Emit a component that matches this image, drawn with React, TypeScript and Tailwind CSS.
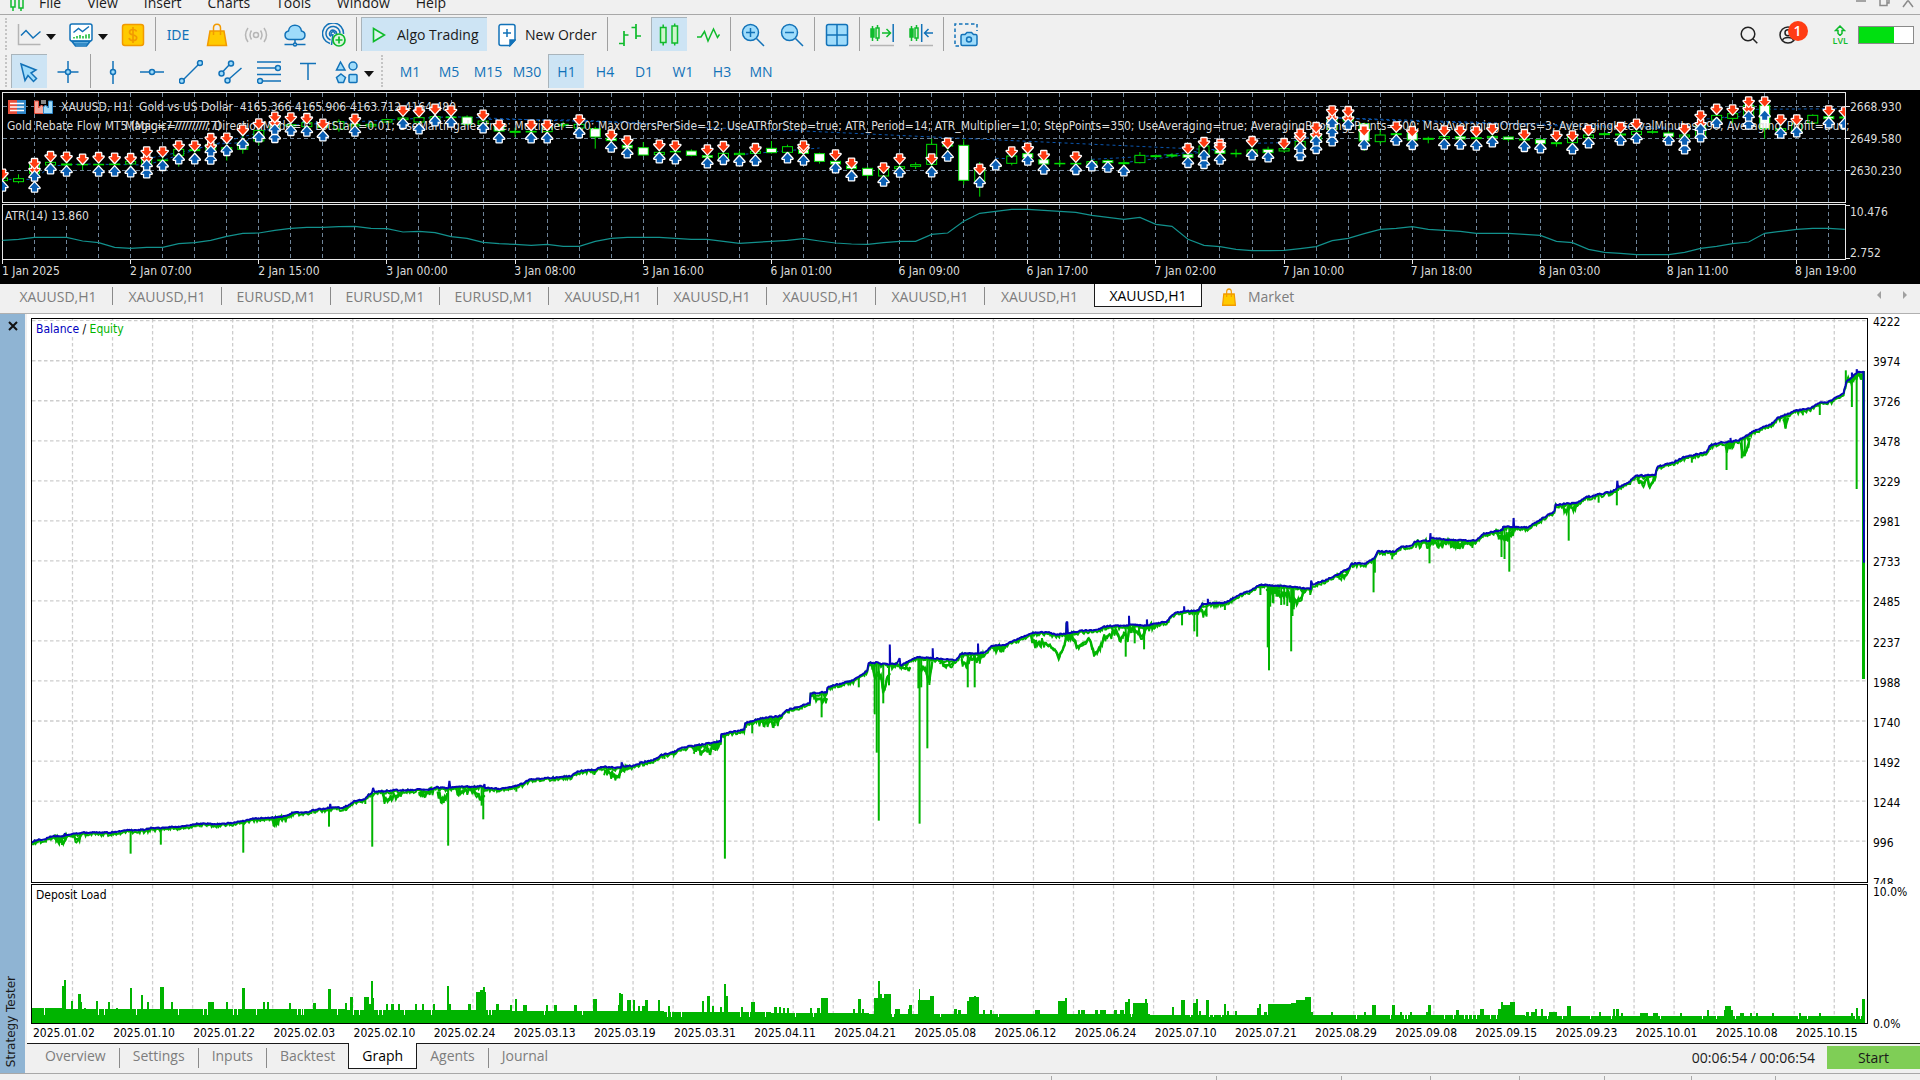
import React from "react";

/* ---------- toolbar icons ---------- */

const B = "#1272b8";
const L = "#9fdcfb";
const G = "#0fbb2c";

type IconProps = { children: React.ReactNode; color?: string };

function Ico({ children, color = B }: IconProps) {
  return (
    <svg width="24" height="24" viewBox="0 0 24 24" fill="none" stroke={color} strokeWidth="1.5" aria-hidden="true">
      {children}
    </svg>
  );
}

const icons = {
  lineChart: (
    <Ico>
      <path d="M1.5 1v20.500h22" stroke="#b4b4b4" />
      <path d="M4 12.500l5-5 7 7.500 7.500-6.500" />
    </Ico>
  ),
  monitor: (
    <Ico>
      <rect x="1" y="1" width="22" height="17" rx="2" fill="#fff" />
      <path d="M4.500 9.500l5-4 4 3 6.500-5" />
      <path d="M5 15.500v-1.500M8 15.500v-2.500M11 15.500v-3.500M14 15.500v-2.500M17 15.500v-4M20 15.500v-4.500" stroke={G} />
      <path d="M3 18.500l3.500 4.500h11l3.500-4.500z" fill={L} />
      <path d="M3 18.500h18M5 21h14" />
    </Ico>
  ),
  dollar: (
    <Ico color="#f29a00">
      <rect x="1.500" y="1.500" width="21" height="21" rx="2.500" fill="#ffca00" />
      <path d="M15.500 8.500c-.5-1.500-1.800-2-3.500-2-2 0-3.500 1-3.500 2.700 0 3.800 7.200 1.800 7.200 5.500 0 1.800-1.700 2.800-3.700 2.800s-3.500-.8-3.900-2.500M12 4v16" strokeWidth="1.700" />
    </Ico>
  ),
  bag: (
    <Ico color="#f29a00">
      <path d="M5 8h14l2.500 14.500h-19z" fill="#ffca00" />
      <path d="M8.500 12V5c0-5 7-5 7 0v7" />
    </Ico>
  ),
  signal: (
    <Ico color="#b6b6b6">
      <circle cx="12" cy="12" r="2.500" />
      <path d="M7.500 7.500q-3 4.500 0 9M16.500 7.500q3 4.500 0 9M4 5q-5 7 0 14M20 5q5 7 0 14" />
    </Ico>
  ),
  cloud: (
    <Ico>
      <path d="M6 16.500a4.300 4.300 0 0 1-.5-8.500c.5-7.500 12-8 13 0a4.300 4.300 0 0 1-.5 8.500z" fill={L} />
      <path d="M12 16.500v4M1.500 21.500h8.500M14 21.500h8.500" />
      <circle cx="12" cy="21.500" r="1.500" />
    </Ico>
  ),
  target: (
    <Ico>
      <path d="M8 20.500A10.500 10.500 0 1 1 21.500 11M8.500 17A7 7 0 1 1 18 10.500M9 13.500a3.500 3.500 0 1 1 5.500-2" />
      <path d="M10 12.500a2 2 0 1 1 3-1.500M11 11l-1.500 11" />
      <circle cx="17" cy="17" r="6" fill="#dff5df" stroke={G} strokeWidth="1.700" />
      <path d="M17 13.500v7M13.500 17h7" stroke={G} strokeWidth="1.700" />
    </Ico>
  ),
  play: (
    <svg width="14" height="16" viewBox="0 0 14 16" fill="#dff5ee" stroke={G} strokeWidth="1.600" aria-hidden="true">
      <path d="M1.500 1.500l11 6.500-11 6.500z" />
    </svg>
  ),
  newOrder: (
    <svg width="18" height="24" viewBox="0 0 18 24" fill="#fff" stroke={B} strokeWidth="1.500" aria-hidden="true">
      <path d="M3 1.500h12a2 2 0 0 1 2 2V17l-5 5.500H3a2 2 0 0 1-2-2v-17a2 2 0 0 1 2-2z" />
      <path d="M17 17l-5 5.500V17z" fill={B} />
      <path d="M9 6v8M5 10h8" />
    </svg>
  ),
  bars: (
    <Ico color={G}>
      <path d="M6 8v15M1 20.500h5M6 12h4.500M18 1v15M13.500 4.500H18M18 13h5" strokeWidth="1.700" />
    </Ico>
  ),
  candles: (
    <Ico color={G}>
      <rect x="3.500" y="4.500" width="5.500" height="15" fill="#cdf5cd" />
      <rect x="15" y="3" width="5.500" height="17" fill="#cdf5cd" />
      <path d="M6.200 1.500v3M6.200 19.500v3M17.700.5V3M17.700 20v2.500" />
    </Ico>
  ),
  wave: (
    <Ico color={G}>
      <path d="M1 14h4l3.500-5.500 3.500 9.500 5.500-12 4 8.500 2-3" />
    </Ico>
  ),
  zoomIn: (
    <Ico>
      <circle cx="9.500" cy="9.500" r="8" fill={L} />
      <path d="M15.500 15.500l7.500 7.500M9.500 5v9M5 9.500h9" />
    </Ico>
  ),
  zoomOut: (
    <Ico>
      <circle cx="9.500" cy="9.500" r="8" fill={L} />
      <path d="M15.500 15.500l7.500 7.500M5 9.500h9" />
    </Ico>
  ),
  tile: (
    <Ico>
      <rect x="1.500" y="1.500" width="21" height="21" rx="2" fill={L} />
      <path d="M12 1.500v21M1.500 12h21" />
    </Ico>
  ),
  scrollEnd: (
    <Ico color={G}>
      <path d="M2.500 3v15M7.500 2v16" />
      <rect x="1" y="6" width="3" height="8" fill={G} />
      <rect x="6" y="5" width="3" height="10" fill="#cdf5cd" />
      <path d="M12 10h8M16.500 6l4 4-4 4" />
      <path d="M23.200 1v18" stroke={B} />
      <path d="M0 22.500h24" stroke="#b4b4b4" />
    </Ico>
  ),
  shift: (
    <Ico color={G}>
      <path d="M2.500 3v15M7.500 2v16" />
      <rect x="1" y="6" width="3" height="8" fill={G} />
      <rect x="6" y="5" width="3" height="10" fill="#cdf5cd" />
      <path d="M12.700 1v18M24 10h-8M19.500 6l-4 4 4 4" stroke={B} />
      <path d="M0 22.500h24" stroke="#b4b4b4" />
    </Ico>
  ),
  camera: (
    <Ico>
      <path d="M5 23H1V1h22v7" strokeDasharray="3.500 2.500" />
      <path d="M7 13q0-1.500 1.500-1.500h2.500l2-2h4.500l2 2h2q1.500 0 1.500 1.500v8q0 1.500-1.500 1.500h-13Q7 22.500 7 21z" fill={L} />
      <circle cx="15" cy="16.500" r="2.500" />
    </Ico>
  ),
  cursor: (
    <Ico>
      <path d="M4 4l15 6-5 3 5.500 5.500-3 3-5.500-6-3 5z" fill={L} />
    </Ico>
  ),
  crosshair: (
    <Ico>
      <path d="M12 1v22M1.500 12h21" />
      <circle cx="12" cy="12" r="2.500" fill={L} />
    </Ico>
  ),
  vline: (
    <Ico>
      <path d="M12 1v23" />
      <circle cx="12" cy="12" r="2.500" fill={L} />
    </Ico>
  ),
  hline: (
    <Ico>
      <path d="M0 12h24" />
      <circle cx="12" cy="12" r="2.500" fill={L} />
    </Ico>
  ),
  trend: (
    <Ico>
      <path d="M4 20L20 4" />
      <circle cx="2.800" cy="21" r="2.500" fill={L} />
      <circle cx="21" cy="3" r="2.500" fill={L} />
    </Ico>
  ),
  channel: (
    <Ico>
      <path d="M4.500 12L12 4M11 19L23.500 8" />
      <circle cx="3.500" cy="13.500" r="2.500" fill={L} />
      <circle cx="13" cy="3.500" r="2.500" fill={L} />
      <circle cx="9.500" cy="20.500" r="2.500" fill={L} />
    </Ico>
  ),
  fibo: (
    <Ico>
      <path d="M0 2h24M0 8h19M0 14.500h24M5 21h19" />
      <circle cx="21" cy="8" r="2.500" fill={L} />
      <circle cx="3" cy="21" r="2.500" fill={L} />
    </Ico>
  ),
  text: (
    <Ico>
      <path d="M4 3.500h16M12 3.500V20" />
    </Ico>
  ),
  shapes: (
    <Ico>
      <path d="M5.500 2L10 10H1.500z" fill={L} />
      <circle cx="18" cy="6" r="4" fill={L} />
      <path d="M6 14l4.500 3.500-2 5h-5l-2-5z" fill={L} />
      <rect x="14" y="14.500" width="8" height="8" rx="1" fill={L} />
    </Ico>
  ),
};

function Sep() {
  return (
    <div className="flex h-[34px] w-[3px] justify-center">
      <div className="w-px bg-[#a0a0a0]" />
    </div>
  );
}

function Grip() {
  return <div className="h-8 w-[3px] border-l-2 border-dotted border-[#c4c4c4]" />;
}

function ToolButton({ icon, label, active }: { icon: React.ReactNode; label: string; active?: boolean }) {
  return (
    <button
      aria-label={label}
      className={
        active
          ? "flex h-[34px] w-9 items-center justify-center border-t border-l border-[#a9b4bb] bg-[#cde4f4] pr-px"
          : "flex h-[34px] w-9 items-center justify-center pt-px"
      }
    >
      {icon}
    </button>
  );
}

function DropButton({ icon, label }: { icon: React.ReactNode; label: string }) {
  return (
    <button aria-label={label} className="flex h-[34px] w-[49px] items-center justify-between pt-px pr-1 pl-[6px]">
      {icon}
      <svg className="mt-1" width="10" height="6" viewBox="0 0 10 6" aria-hidden="true">
        <path d="M0 0h10L5 6z" fill="#111" />
      </svg>
    </button>
  );
}

/* ---------- price chart ---------- */

const slotX = (i: number) => 2.5 + 16.02 * i;
const rowY = (v: number) => 86 + v / 3;

const sells: [number, ...number[]][] = [
  [0, 265], [2, 252, 233], [3, 212], [4, 214], [5, 220], [6, 215], [7, 217], [8, 218], [9, 219, 198], [10, 198], [11, 180],
  [12, 180], [13, 182, 158], [14, 157], [15, 133], [16, 114], [17, 112, 94], [18, 96], [19, 98], [20, 115], [22, 100],
  [25, 75], [26, 77], [27, 70], [28, 75], [30, 88], [31, 118], [33, 118], [34, 118], [36, 102], [38, 148], [39, 165],
  [41, 178], [42, 180], [44, 192], [45, 182], [47, 188], [50, 188, 180], [52, 207], [53, 232], [55, 246], [56, 219],
  [58, 219], [59, 172], [61, 250], [63, 198], [64, 187], [65, 209], [67, 213], [74, 188], [75, 170], [76, 175, 184],
  [78, 167], [80, 173], [81, 155, 145], [82, 148, 125], [83, 98, 75], [84, 98, 77], [85, 135], [87, 123], [88, 137],
  [90, 135], [91, 135], [92, 137], [93, 130], [95, 146], [97, 150], [98, 150], [99, 133], [101, 125], [102, 115],
  [105, 130], [106, 115, 90], [107, 70], [108, 72], [109, 70, 48], [110, 48], [111, 102], [112, 102], [114, 75], [115, 78],
];

const buys: [number, ...number[]][] = [
  [0, 300], [2, 303, 270], [3, 248], [4, 255], [6, 255], [7, 255], [8, 257], [9, 260, 237], [10, 238], [11, 218],
  [12, 218], [13, 219, 195], [14, 193], [15, 173], [16, 152], [17, 154, 130], [18, 133], [19, 135], [20, 149], [22, 135],
  [25, 112], [26, 128], [27, 104], [28, 108], [30, 125], [31, 155], [33, 155], [34, 155], [36, 140], [38, 183],
  [39, 200], [41, 215], [42, 218], [44, 230], [45, 220], [46, 224], [47, 223], [49, 215], [50, 222], [52, 245],
  [53, 269], [55, 285], [56, 258], [58, 257], [59, 210], [61, 288], [62, 236], [64, 222], [65, 249], [67, 250],
  [68, 239], [69, 243], [70, 254], [74, 229], [75, 232, 208], [76, 219], [78, 206], [79, 212], [81, 208, 185],
  [82, 187, 164], [83, 164, 138, 110], [84, 115], [85, 175], [87, 162], [88, 175], [90, 174], [91, 174], [92, 177],
  [93, 167], [95, 181], [96, 185], [98, 188], [99, 170], [101, 162], [102, 156], [104, 162], [105, 188, 163],
  [106, 152, 128], [107, 110], [109, 114, 90], [110, 88], [111, 141], [112, 137], [114, 110], [115, 112],
];

/* slot, high, body top, body bottom, low, falling */
const candles: [number, number, number, number, number, 0 | 1][] = [
  [0, 265, 276, 284, 295, 0], [1, 265, 278, 287, 292, 0], [2, 225, 235, 262, 290, 0], [3, 215, 229, 237, 245, 0],
  [4, 220, 234, 237, 250, 0], [5, 225, 235, 236, 252, 0], [6, 225, 235, 236, 250, 0], [7, 225, 234, 236, 245, 0],
  [8, 220, 226, 234, 245, 0], [9, 210, 218, 234, 245, 0], [10, 210, 222, 224, 240, 0], [11, 180, 190, 208, 242, 0],
  [12, 180, 191, 194, 215, 0], [13, 165, 175, 192, 210, 0], [14, 160, 185, 190, 224, 0], [15, 140, 170, 190, 203, 0],
  [16, 125, 133, 165, 178, 0], [17, 110, 120, 133, 150, 0], [18, 100, 116, 120, 135, 0], [19, 100, 110, 122, 138, 0],
  [20, 110, 118, 124, 140, 1], [21, 100, 107, 129, 137, 0], [22, 104, 115, 120, 130, 0], [23, 108, 115, 120, 125, 0],
  [24, 98, 101, 108, 112, 0], [25, 84, 96, 101, 110, 0], [26, 88, 95, 108, 118, 0], [27, 84, 92, 100, 110, 0],
  [28, 80, 93, 95, 108, 0], [29, 88, 93, 115, 119, 1], [30, 95, 105, 114, 125, 0], [31, 110, 121, 135, 147, 1],
  [32, 125, 136, 139, 153, 0], [33, 125, 136, 138, 150, 0], [34, 118, 125, 137, 148, 0], [35, 107, 115, 119, 125, 0],
  [36, 108, 115, 126, 135, 0], [37, 122, 128, 153, 188, 1], [38, 148, 157, 164, 175, 1], [39, 168, 178, 186, 194, 1],
  [40, 168, 185, 207, 210, 1], [41, 185, 199, 206, 212, 0], [42, 185, 196, 197, 208, 0], [43, 190, 195, 208, 211, 1],
  [44, 200, 209, 214, 221, 1], [45, 195, 202, 216, 220, 0], [46, 195, 202, 206, 215, 0], [47, 190, 196, 202, 210, 0],
  [48, 165, 187, 200, 203, 1], [49, 176, 182, 199, 205, 0], [50, 185, 193, 202, 210, 1], [51, 200, 203, 226, 233, 1],
  [52, 215, 226, 234, 240, 1], [53, 236, 240, 248, 255, 1], [54, 242, 247, 268, 278, 1], [55, 245, 250, 270, 277, 0],
  [56, 232, 242, 248, 253, 0], [57, 229, 236, 241, 249, 0], [58, 158, 175, 235, 250, 0], [59, 165, 178, 180, 195, 0],
  [60, 160, 178, 283, 296, 1], [61, 228, 250, 285, 332, 0], [62, 225, 238, 242, 248, 0], [63, 185, 210, 232, 238, 0],
  [64, 190, 203, 215, 222, 1], [65, 208, 221, 234, 240, 1], [66, 222, 232, 233, 242, 0], [67, 222, 232, 234, 245, 0],
  [68, 220, 227, 235, 240, 0], [69, 220, 224, 230, 236, 1], [70, 222, 230, 233, 240, 0], [71, 198, 208, 230, 232, 0],
  [72, 205, 209, 212, 215, 0], [73, 202, 207, 210, 215, 0], [74, 198, 206, 214, 222, 1], [75, 175, 180, 206, 220, 0],
  [76, 185, 193, 202, 212, 1], [77, 190, 202, 203, 214, 0], [78, 182, 192, 204, 212, 0], [79, 182, 190, 200, 206, 1],
  [80, 175, 188, 195, 200, 0], [81, 158, 166, 190, 200, 0], [82, 140, 150, 168, 178, 0], [83, 85, 95, 130, 150, 0],
  [84, 85, 92, 105, 118, 0], [85, 110, 113, 165, 195, 1], [86, 130, 147, 167, 175, 0], [87, 135, 143, 146, 152, 0],
  [88, 132, 142, 162, 168, 1], [89, 152, 157, 160, 172, 0], [90, 145, 152, 158, 165, 0], [91, 146, 152, 159, 166, 1],
  [92, 146, 155, 158, 166, 0], [93, 142, 151, 155, 163, 0], [94, 150, 153, 160, 167, 1], [95, 150, 159, 162, 170, 0],
  [96, 155, 161, 173, 178, 1], [97, 162, 170, 173, 182, 0], [98, 150, 154, 170, 178, 0], [99, 140, 147, 155, 163, 0],
  [100, 138, 143, 146, 148, 0], [101, 134, 144, 147, 155, 0], [102, 130, 136, 146, 152, 0], [103, 132, 137, 139, 143, 0],
  [104, 135, 141, 151, 158, 1], [105, 138, 147, 153, 162, 0], [106, 110, 120, 150, 155, 0], [107, 80, 88, 102, 112, 0],
  [108, 80, 83, 97, 112, 0], [109, 52, 58, 90, 98, 0], [110, 40, 58, 128, 158, 1], [111, 112, 128, 134, 142, 0],
  [112, 108, 113, 135, 142, 0], [113, 85, 88, 111, 114, 0], [114, 82, 92, 98, 104, 1], [115, 84, 93, 96, 104, 0],
];

const atr = [
  463, 460, 454, 454, 454, 465, 470, 484, 487, 484, 484, 473, 470, 463, 451, 442, 441, 433, 427, 424, 424, 422, 421, 427,
  428, 438, 436, 440, 452, 457, 469, 473, 475, 478, 475, 481, 481, 466, 457, 454, 454, 454, 457, 460, 460, 466, 472, 469,
  466, 463, 458, 465, 471, 474, 475, 470, 466, 466, 445, 441, 406, 382, 376, 370, 370, 373, 376, 379, 388, 394, 400, 394,
  415, 421, 460, 478, 482, 490, 494, 494, 493, 488, 482, 464, 457, 443, 430, 427, 422, 430, 433, 436, 442, 442, 442, 445,
  448, 466, 470, 490, 499, 502, 506, 506, 506, 499, 487, 481, 473, 468, 442, 436, 430, 427, 427, 430,
];

const dealLinks: [number, number][][] = [
  [[0, 280], [2, 280], [3, 240], [5, 234], [9, 237], [11, 208], [13, 175], [15, 170], [17, 120], [28, 92], [34, 103], [40, 110]],
  [[9, 218], [12, 190], [16, 140], [17, 120]],
  [[30, 100], [36, 102], [44, 125], [50, 135], [59, 155], [75, 190]],
  [[46, 206], [50, 190], [51, 186]],
  [[62, 217], [63, 218]],
  [[68, 220], [70, 215], [73, 205], [76, 188]],
  [[70, 230], [73, 212], [76, 190]],
  [[78, 172], [80, 170], [82, 150], [83, 95], [87, 104], [96, 118], [105, 130], [109, 70], [115, 68]],
  [[83, 95], [94, 112], [104, 124]],
  [[106, 100], [109, 90]],
];

const DOWN = "M-2.500-4.500h5V-1H5L0 4.500-5-1h2.500z";
const UP = "M-2.500 4.500h5V1H5L0-4.500-5 1h2.500z";

const chartTimes = [
  "1 Jan 2025", "2 Jan 07:00", "2 Jan 15:00", "3 Jan 00:00", "3 Jan 08:00", "3 Jan 16:00", "6 Jan 01:00", "6 Jan 09:00",
  "6 Jan 17:00", "7 Jan 02:00", "7 Jan 10:00", "7 Jan 18:00", "8 Jan 03:00", "8 Jan 11:00", "8 Jan 19:00",
];

function PriceChart() {
  const gridX = Array.from({ length: 57 }, (_, k) => Math.floor(34.5 + 32.04 * k) + 0.5);
  return (
    <section
      aria-label="XAUUSD, H1"
      className="overflow-hidden bg-black font-['DejaVu_Sans_Condensed','DejaVu_Sans',sans-serif] text-xs text-[#dcdcdc]"
    >
      <div className="flex">
        <div className="relative min-w-0 flex-1 overflow-hidden">
          <svg className="block h-[174px] w-full" viewBox="0 90 1850 174" preserveAspectRatio="none" aria-hidden="true">
            <clipPath id="pane">
              <rect x="2" y="92" width="1843" height="112" />
            </clipPath>
            <g stroke="#6f8498" strokeDasharray="4 3" shapeRendering="crispEdges">
              {gridX.map((x) => (
                <path key={x} d={`M${x} 93V202M${x} 205V259`} />
              ))}
              {[106.5, 138.5, 170.5].map((y) => (
                <path key={y} d={`M3 ${y}H1845`} />
              ))}
            </g>
            <g clipPath="url(#pane)">
              <g fill="none" stroke="#0b57b0" strokeDasharray="3 3">
                {dealLinks.map((pts, n) => (
                  <polyline key={n} points={pts.map(([i, v]) => `${slotX(i)},${rowY(v)}`).join(" ")} />
                ))}
              </g>
              <g stroke="#00e000">
                {candles.map(([i, hi, top, bot, lo, falling]) => (
                  <g key={i}>
                    <path d={`M${slotX(i)} ${rowY(hi)}V${rowY(lo)}`} />
                    <rect
                      x={slotX(i) - 5}
                      y={rowY(top)}
                      width="10"
                      height={Math.max(0.5, (bot - top) / 3)}
                      fill={falling ? "#fff" : "#000"}
                    />
                  </g>
                ))}
              </g>
            </g>
            <g fill="none" stroke="#e8e8e8" shapeRendering="crispEdges">
              <rect x="2.500" y="92.500" width="1843" height="110" />
              <rect x="2.500" y="204.500" width="1843" height="55" />
              <path d="M1845 106.500h5M1845 138.500h5M1845 170.500h5M1845 205.500h5M1845 258.500h5" />
              {Array.from({ length: 15 }, (_, k) => (
                <path key={k} d={`M${2.5 + 128.15 * k} 260v4`} />
              ))}
            </g>
            <polyline fill="none" stroke="#12918d" strokeWidth="1.200" points={atr.map((v, i) => `${slotX(i)},${rowY(v)}`).join(" ")} />
          </svg>
          <div className="absolute top-[9px] left-2 flex items-center gap-[8px] whitespace-pre">
            <svg width="18" height="14" viewBox="0 0 18 14" aria-hidden="true">
              <rect width="9" height="14" fill="#e8503c" />
              <rect x="9" width="9" height="14" fill="#2f86c8" />
              <path d="M2 3.500h14M2 7h14M2 10.500h14" stroke="#fff" strokeWidth="1.500" />
            </svg>
            <svg width="19" height="14" viewBox="0 0 19 14" aria-hidden="true">
              <path d="M.5 1h4v7l3-3 2 2v6.500h-9z" fill="#f7a89c" stroke="#e8503c" />
              <path d="M18.500 1h-4v7l-3-3-2 2v6.500h9z" fill="#9fdcfb" stroke="#2f86c8" />
              <path d="M7 0h5v4H7z" fill="#888" />
            </svg>
            <span>XAUUSD, H1:  Gold vs US Dollar  4165.366 4165.906 4163.712 4164.480</span>
          </div>
          <p className="absolute top-7 left-[7px] whitespace-nowrap">Gold Rebate Flow MT5 (Magic=777777)</p>
          <p className="absolute top-7 left-[125px] whitespace-nowrap">
            Magic=777777; DirectionMode=1; LotStart=0.01; UseMartingale=true; Multiplier=1.0; MaxOrdersPerSide=12;
            UseATRforStep=true; ATR_Period=14; ATR_Multiplier=1.0; StepPoints=350; UseAveraging=true;
            AveragingBooking_Points=600; MaxAveragingOrders=3; AveragingIntervalMinutes=90; Averaging_Profit=true;
          </p>
          <p className="absolute top-[118px] left-[5px] bg-black">ATR(14) 13.860</p>
          <svg className="absolute inset-0 h-[174px] w-full" viewBox="0 90 1850 174" preserveAspectRatio="none" aria-hidden="true">
            <g clipPath="url(#pane)" stroke="#fff" strokeWidth="2.600" strokeLinejoin="round" paintOrder="stroke">
              {sells.flatMap(([i, ...ys]) =>
                ys.map((v) => <path key={`${i}-${v}`} d={DOWN} fill="#ff3b12" transform={`translate(${slotX(i)} ${rowY(v)})`} />),
              )}
              {buys.flatMap(([i, ...ys]) =>
                ys.map((v) => <path key={`${i}-${v}`} d={UP} fill="#0a5fb4" transform={`translate(${slotX(i)} ${rowY(v)})`} />),
              )}
            </g>
          </svg>
        </div>
        <div className="w-[70px] pt-px leading-4">
          {["2668.930", "2649.580", "2630.230"].map((t) => (
            <p key={t} className="flex h-8 items-center">{t}</p>
          ))}
          <p className="pt-[17px]">10.476</p>
          <p className="pt-[25px]">2.752</p>
        </div>
      </div>
      <div className="-mr-[3px] grid h-5 grid-cols-[repeat(15,minmax(0,1fr))] pl-[2px] leading-[15px]">
        {chartTimes.map((t) => (
          <span key={t} className="whitespace-nowrap">{t}</span>
        ))}
      </div>
    </section>
  );
}

/* ---------- tester graph ---------- */

/* Each segment holds samples in its own grid: origin, units per pixel across, then the points. */
type Pt = [number, number];
type Segment = { x0: number; y0: number; k: number; balance: Pt[]; spikes: Pt[]; dips: Pt[][] };

const segments: Segment[] = [
  {
    x0: 0, y0: 640, k: 2.45,
    balance: [
      [77, 607], [85, 600], [110, 597], [125, 588], [158, 587], [159, 577], [161, 587], [175, 582], [205, 577], [270, 577],
      [300, 571], [355, 568], [372, 563], [400, 563], [440, 559], [480, 551], [550, 551], [570, 547], [600, 541], [620, 535],
      [660, 533], [700, 528], [718, 516], [750, 517], [770, 509], [808, 503], [809, 492], [811, 502], [840, 502], [860, 490],
      [868, 483], [895, 477], [903, 463], [912, 458], [914, 443], [918, 455], [960, 450], [1060, 447], [1070, 441],
      [1099, 444], [1101, 422], [1103, 441], [1185, 438], [1187, 432], [1188, 442], [1225, 446], [1260, 438], [1285, 428],
      [1295, 418], [1350, 413], [1400, 407], [1415, 393], [1460, 388], [1475, 379], [1522, 383], [1523, 364], [1526, 378],
      [1550, 377], [1567, 370],
    ],
    spikes: [
      [152, 615], [320, 641], [394, 614], [596, 638], [675, 555], [806, 560], [848, 513], [895, 492], [912, 620], [1098, 617],
      [1180, 497], [1184, 538], [1265, 455], [1456, 405],
    ],
    dips: [
      [[135, 592], [145, 602], [155, 608], [165, 590]],
      [[175, 588], [192, 594], [200, 585]],
      [[665, 538], [675, 548], [682, 536], [705, 532]],
      [[938, 462], [942, 483], [952, 474], [975, 462], [985, 453]],
      [[1025, 452], [1035, 464], [1050, 457], [1062, 450]],
      [[1072, 452], [1080, 470], [1092, 478], [1096, 460]],
      [[1118, 445], [1130, 456], [1150, 448], [1168, 455], [1178, 478], [1187, 466]],
      [[1480, 388], [1500, 401], [1515, 408], [1522, 388], [1545, 385]],
    ],
  },
  {
    x0: 640, y0: 560, k: 2.45,
    balance: [
      [0, 608], [40, 596], [50, 585], [85, 575], [100, 562], [150, 553], [198, 543], [199, 522], [255, 507], [258, 488],
      [300, 473], [345, 467], [360, 450], [416, 428], [418, 399], [458, 395], [459, 382], [480, 373], [520, 361],
      [545, 343], [557, 330], [560, 307], [585, 307], [588, 311], [612, 312], [612, 254], [613, 312], [630, 310],
      [636, 293], [638, 316], [680, 290], [717, 294], [717, 263], [718, 294], [775, 298], [787, 280], [828, 280],
      [828, 250], [829, 279], [845, 275], [862, 257], [895, 254], [935, 230], [965, 217], [1000, 216], [1020, 223],
      [1044, 220], [1045, 187], [1047, 187], [1048, 219], [1085, 210], [1115, 210], [1140, 198], [1198, 195], [1198, 167],
      [1199, 194], [1242, 195], [1242, 176], [1243, 195], [1290, 183], [1310, 158], [1333, 153], [1333, 140], [1334, 153],
      [1368, 151], [1378, 130], [1391, 130], [1391, 115], [1392, 130], [1435, 127], [1465, 105], [1500, 88], [1520, 73],
      [1568, 77],
    ],
    spikes: [
      [60, 597], [165, 578], [208, 896], [275, 520], [330, 498], [445, 472], [536, 382], [575, 463], [580, 578], [585, 782],
      [596, 430], [610, 376], [682, 385], [685, 791], [689, 382], [704, 565], [709, 375], [803, 382], [820, 382],
      [1190, 290], [1212, 250], [1235, 268], [1328, 196], [1358, 214], [1365, 230], [1388, 170], [1433, 150], [1520, 105],
      [1538, 262], [1541, 331], [1544, 140], [1550, 128],
    ],
    dips: [
      [[130, 563], [155, 572], [168, 575], [180, 556], [195, 552]],
      [[290, 483], [325, 487], [345, 476]],
      [[422, 405], [436, 415], [458, 415]],
      [[568, 315], [578, 350], [590, 345], [597, 395], [605, 355], [612, 340]],
      [[615, 315], [640, 318], [650, 325], [662, 322]],
      [[682, 330], [700, 328], [709, 360], [716, 305]],
      [[735, 305], [755, 315], [770, 302]],
      [[788, 300], [800, 315], [810, 295], [825, 300], [845, 285]],
      [[865, 260], [885, 268], [895, 258]],
      [
        [958, 225], [968, 248], [985, 245], [1000, 255], [1012, 262], [1028, 285], [1038, 262], [1045, 225], [1060, 228],
        [1070, 262], [1085, 245], [1102, 238], [1115, 282], [1140, 228], [1165, 215], [1175, 236], [1183, 224], [1195, 230],
        [1200, 200], [1215, 210], [1230, 225], [1240, 205], [1265, 193],
      ],
      [[1370, 140], [1380, 155], [1388, 165]],
      [[1535, 85], [1550, 100], [1568, 92]],
    ],
  },
  {
    x0: 1240, y0: 316, k: 2.306,
    balance: [
      [93, 808], [120, 812], [163, 818], [164, 793], [167, 804], [210, 785], [250, 757], [258, 742], [290, 741],
      [310, 725], [318, 705], [355, 706], [370, 693], [395, 687], [405, 675], [438, 673], [439, 650], [440, 664], [480, 671],
      [545, 673], [560, 653], [605, 641], [607, 630], [630, 632], [631, 604], [632, 632], [663, 633], [690, 612],
      [725, 585], [728, 565], [775, 560], [800, 542], [860, 525], [869, 515], [870, 494], [872, 513], [895, 500],
      [912, 478], [958, 476], [962, 452], [1000, 438], [1020, 424], [1075, 407], [1083, 388], [1110, 378], [1131, 376],
      [1131, 365], [1132, 376], [1150, 372], [1170, 357], [1185, 344], [1225, 323], [1240, 305], [1280, 284], [1318, 275],
      [1335, 260], [1355, 259], [1392, 230], [1398, 197], [1411, 183], [1411, 168], [1412, 182], [1422, 170], [1422, 158],
      [1423, 166], [1438, 166], [1439, 740],
    ],
    spikes: [
      [77, 862], [84, 842], [95, 867], [102, 866], [109, 870], [118, 1006], [121, 900], [124, 880], [162, 837], [308, 829],
      [311, 770], [351, 730], [437, 742], [458, 698], [502, 694], [603, 723], [610, 729], [621, 767], [758, 674],
      [827, 560], [869, 568], [1042, 440], [1122, 462], [1130, 400], [1157, 427], [1164, 416], [1298, 298], [1337, 297],
      [1258, 338], [1411, 273], [1422, 519], [1397, 163],
    ],
    dips: [
      [[66, 812], [75, 826], [85, 818], [95, 838], [110, 828], [120, 858], [135, 848], [145, 835], [152, 822]],
      [[222, 777], [245, 775], [250, 765]],
      [[405, 680], [438, 680], [448, 672], [460, 690], [475, 676], [500, 682], [545, 678]],
      [[590, 645], [603, 665], [615, 658], [625, 662], [632, 636]],
      [[745, 572], [753, 585], [762, 575], [780, 566]],
      [[915, 485], [928, 497], [940, 488], [945, 510], [952, 500], [958, 480]],
      [[1120, 395], [1130, 390], [1140, 378]],
      [[1155, 380], [1160, 408], [1166, 410], [1175, 365]],
      [[1253, 305], [1258, 330], [1264, 305]],
      [[1400, 185], [1410, 195], [1422, 180], [1438, 172]],
    ],
  },
];

const noise = (n: number) => {
  const s = Math.sin(n * 127.1) * 43758.5453;
  return s - Math.floor(s);
};

/* Resamples a polyline every pixel and adds a small ripple around it. */
function ripple(pts: Pt[], base: number, amp: number): Pt[] {
  const out: Pt[] = [];
  for (let j = 0; j < pts.length - 1; j++) {
    const [ax, ay] = pts[j];
    const [bx, by] = pts[j + 1];
    const steps = Math.max(1, Math.round(bx - ax));
    for (let s = 0; s < steps; s++) {
      const t = s / steps;
      const x = ax + (bx - ax) * t;
      out.push([x, ay + (by - ay) * t + base + (noise(x) - 0.3) * amp]);
    }
  }
  out.push(pts[pts.length - 1]);
  return out;
}

const toPage = (s: Segment, pts: Pt[]): Pt[] => pts.map(([x, y]) => [s.x0 + x / s.k, s.y0 + y / 3]);
const toPath = (pts: Pt[]) => pts.map(([x, y]) => `${x.toFixed(1)},${y.toFixed(1)}`).join(" ");
const balancePts: Pt[] = segments.flatMap((s) => toPage(s, s.balance));

/* The equity trace follows the balance without its momentary upward peaks. */
const equityBase = balancePts.slice(0, -1).filter((p, i, a) => {
  if (i === 0 || i >= a.length - 1) return true;
  const after = a[i + 1][0] - p[0] < 2.2 ? a[i + 1][1] - p[1] : 0;
  return after < 2.5;
});

function balanceAt(x: number) {
  for (let j = 0; j < balancePts.length - 1; j++) {
    const [ax, ay] = balancePts[j];
    const [bx, by] = balancePts[j + 1];
    if (x >= ax && x <= bx && bx > ax) return ay + ((by - ay) * (x - ax)) / (bx - ax);
  }
  return balancePts[0][1];
}

const balanceLevels = [4222, 3974, 3726, 3478, 3229, 2981, 2733, 2485, 2237, 1988, 1740, 1492, 1244, 996, 748];

const testerDates = [
  "2025.01.02", "2025.01.10", "2025.01.22", "2025.02.03", "2025.02.10", "2025.02.24", "2025.03.13", "2025.03.19",
  "2025.03.31", "2025.04.11", "2025.04.21", "2025.05.08", "2025.06.12", "2025.06.24", "2025.07.10", "2025.07.21",
  "2025.08.29", "2025.09.08", "2025.09.15", "2025.09.23", "2025.10.01", "2025.10.08", "2025.10.15",
];

const gridColumns = Array.from({ length: 45 }, (_, k) => 72.5 + 40.04 * k);

/* centre, width, top */
type Bar = [number, number, number];
const loadParts: { x0: number; bars: Bar[]; base: [number, number, number][]; gaps: number[] }[] = [
  {
    x0: 0,
    base: [[77, 155, 444], [155, 845, 447], [845, 1255, 450], [1255, 1568, 453]],
    gaps: [108, 205, 241, 256, 333, 437, 498, 508, 570, 580, 628, 728, 738, 742, 825, 865, 880, 927, 935, 990, 1055, 1195, 1202, 1332, 1425],
    bars: [
      [155, 5, 378], [159, 4, 360], [177, 4, 423], [195, 7, 402], [199, 4, 427], [208, 4, 443], [237, 4, 423], [267, 4, 427],
      [286, 4, 443], [320, 5, 384], [347, 5, 405], [362, 4, 427], [397, 10, 381], [421, 5, 427], [517, 13, 426],
      [556, 5, 426], [597, 7, 384], [647, 5, 426], [656, 5, 426], [711, 5, 429], [771, 7, 429], [808, 8, 387], [848, 5, 429],
      [861, 6, 411], [898, 11, 411], [907, 5, 432], [912, 5, 363], [915, 4, 415], [949, 5, 432], [962, 8, 432],
      [978, 5, 432], [1020, 5, 432], [1037, 5, 432], [1064, 5, 432], [1098, 5, 378], [1102, 4, 432], [1150, 9, 432],
      [1179, 24, 396], [1183, 12, 390], [1185, 5, 381], [1219, 6, 432], [1253, 5, 435], [1265, 5, 417], [1286, 8, 435],
      [1341, 5, 435], [1361, 5, 435], [1410, 5, 435], [1458, 8, 417], [1515, 4, 435], [1519, 6, 400], [1523, 5, 402],
      [1541, 8, 420], [1553, 5, 420], [1566, 5, 438],
    ],
  },
  {
    x0: 640,
    base: [[0, 60, 453], [60, 320, 456], [320, 560, 459], [560, 1250, 462], [1250, 1568, 465]],
    gaps: [65, 75, 100, 246, 268, 307, 380, 425, 617, 621, 735, 878, 1203, 1348, 1395, 1405, 1423],
    bars: [
      [10, 12, 438], [16, 6, 420], [47, 6, 420], [72, 5, 438], [155, 6, 423], [168, 6, 408], [178, 5, 438], [198, 5, 441],
      [208, 5, 372], [212, 6, 408], [249, 5, 441], [277, 8, 426], [331, 7, 441], [343, 4, 441], [352, 5, 444], [362, 5, 444],
      [418, 5, 444], [437, 8, 444], [452, 18, 414], [524, 5, 447], [537, 7, 417], [546, 5, 447], [594, 40, 415],
      [575, 4, 426], [585, 5, 363], [588, 12, 402], [606, 16, 403], [630, 12, 447], [663, 6, 435], [659, 5, 447],
      [700, 38, 420], [685, 4, 387], [715, 10, 408], [772, 7, 447], [782, 7, 450], [815, 30, 423], [818, 24, 411],
      [821, 4, 408], [842, 5, 450], [859, 5, 450], [974, 12, 450], [1034, 22, 423], [1043, 5, 414], [1075, 5, 450],
      [1085, 10, 450], [1118, 7, 450], [1135, 14, 450], [1165, 7, 450], [1181, 10, 450], [1194, 11, 426], [1198, 5, 417],
      [1226, 38, 429], [1239, 5, 417], [1306, 7, 441], [1330, 9, 420], [1360, 10, 429], [1364, 5, 417], [1372, 5, 453],
      [1390, 6, 420], [1433, 5, 432], [1440, 5, 453], [1460, 5, 453], [1515, 8, 444], [1519, 5, 432], [1533, 6, 456],
      [1553, 30, 432],
    ],
  },
  {
    x0: 1280,
    base: [[0, 600, 465], [600, 1433, 468]],
    gaps: [187, 270, 303, 310, 402, 425, 450, 460, 470, 480, 515, 530, 655, 690, 760, 812, 932, 1035, 1068, 1087, 1115, 1270, 1290, 1408, 1421],
    bars: [
      [18, 38, 432], [33, 10, 429], [56, 36, 420], [69, 14, 411], [79, 5, 457], [128, 5, 457], [209, 5, 457], [231, 9, 435],
      [278, 9, 435], [297, 5, 457], [321, 5, 457], [362, 8, 457], [366, 6, 435], [435, 6, 450], [495, 10, 447],
      [553, 40, 447], [557, 30, 436], [543, 5, 426], [569, 12, 427], [607, 8, 457], [621, 12, 457], [628, 5, 447],
      [643, 5, 447], [669, 18, 457], [708, 8, 438], [783, 5, 457], [818, 5, 447], [827, 6, 447], [837, 5, 460],
      [892, 18, 460], [919, 12, 460], [982, 5, 460], [1048, 6, 450], [1098, 22, 450], [1098, 14, 438], [1132, 8, 460],
      [1153, 5, 460], [1168, 5, 460], [1207, 5, 460], [1273, 5, 460], [1323, 5, 460], [1401, 5, 460], [1413, 5, 444],
      [1429, 7, 418],
    ],
  },
];

function BalanceGraph() {
  return (
    <svg className="block h-full w-full" viewBox="32 319 1835 563" preserveAspectRatio="none" aria-hidden="true">
      <g stroke="#cdcdcd" strokeWidth="1.300" strokeDasharray="3.500 2.500">
        {gridColumns.map((x) => (
          <path key={x} d={`M${x} 319V882`} />
        ))}
        {balanceLevels.slice(0, 14).map((v, k) => (
          <path key={v} d={`M32 ${320.7 + 40.03 * k}H1867`} />
        ))}
      </g>
      <g fill="none" stroke="#00b400">
        <polyline points={toPath(ripple(equityBase, 1.3, 3.4))} strokeWidth="2" />
        {segments.map((s) => (
          <g key={s.x0}>
            {s.dips.map((d, n) => (
              <polyline key={n} points={toPath(ripple(toPage(s, d), -1, 10))} strokeWidth="1.800" />
            ))}
            {s.dips.map((d, n) => (
              <polyline key={n} points={toPath(ripple(toPage(s, d), 0, 3))} strokeWidth="2.400" />
            ))}
            {toPage(s, s.spikes).map(([x, y]) => (
              <path key={x} d={`M${x} ${balanceAt(x)}V${y}`} strokeWidth="2" />
            ))}
          </g>
        ))}
        <path d="M1863.500 371V679" strokeWidth="3" />
      </g>
      <polyline fill="none" stroke="#0808b8" strokeWidth="2" points={toPath(ripple(balancePts, 0, 1.4))} strokeLinejoin="bevel" />
    </svg>
  );
}

function LoadGraph() {
  return (
    <svg className="block h-full w-full" viewBox="32 885 1835 138" preserveAspectRatio="none" aria-hidden="true">
      <g stroke="#cdcdcd" strokeWidth="1.300" strokeDasharray="3.500 2.500">
        {gridColumns.map((x) => (
          <path key={x} d={`M${x} 885V1023`} />
        ))}
      </g>
      {loadParts.map((p) => (
        <g key={p.x0} fill="#00b400" shapeRendering="crispEdges">
          {p.base.map(([a, b, top]) => (
            <rect key={a} x={p.x0 + a / 2.45} y={860 + top / 3} width={(b - a) / 2.45} height={164 - top / 3} />
          ))}
          {p.gaps.map((g) => (
            <rect key={g} x={Math.round(p.x0 + g / 2.45)} y="1008" width="1" height={p.x0 === 0 ? 7 : p.x0 === 640 ? 9 : 11} fill="#fff" />
          ))}
          {p.bars.map(([c, w, top]) => (
            <rect key={`${c}-${top}`} x={p.x0 + (c - w / 2) / 2.45} y={860 + top / 3} width={w / 2.45} height={164 - top / 3} />
          ))}
        </g>
      ))}
    </svg>
  );
}

/* ---------- page ---------- */

const chartTabs = ["XAUUSD,H1", "XAUUSD,H1", "EURUSD,M1", "EURUSD,M1", "EURUSD,M1", "XAUUSD,H1", "XAUUSD,H1", "XAUUSD,H1", "XAUUSD,H1", "XAUUSD,H1"];
const timeframes = ["M1", "M5", "M15", "M30", "H1", "H4", "D1", "W1", "H3", "MN"];

export default function App() {
  return (
    <div className="flex h-screen min-h-[640px] flex-col overflow-hidden bg-[#f0f0f0] font-['Open_Sans',sans-serif] text-sm text-[#1a1a1a]">
      <header className="flex h-[15px] items-start justify-between overflow-hidden border-b border-[#a8a8a8]">
        <nav className="-mt-2 flex items-start gap-[15px] pl-[10px] leading-[22px]">
          <svg className="mt-1" width="14" height="16" viewBox="0 0 14 16" fill="none" stroke={G} strokeWidth="1.500" aria-hidden="true">
            <path d="M1 1v10h4V1M9 1v11h4V1M3 11v4M11 12v3" />
          </svg>
          <div className="flex gap-[26px]">
            {["File", "View", "Insert", "Charts", "Tools", "Window", "Help"].map((m) => (
              <button key={m}>{m}</button>
            ))}
          </div>
        </nav>
        <svg className="mr-[6px]" width="58" height="8" viewBox="0 0 58 8" fill="none" stroke="#8a8a8a" strokeWidth="1.500" aria-hidden="true">
          <path d="M0 1h10M24 0v5.500h7V0M31 3h2V0M47 7l4.500-6h1L57 7" />
        </svg>
      </header>

      <div className="flex items-start justify-between pt-[2px]">
        <div className="flex items-center gap-[3px] pl-[5px]">
          <Grip />
          <DropButton icon={icons.lineChart} label="Chart type" />
          <DropButton icon={icons.monitor} label="Profiles" />
          <ToolButton icon={icons.dollar} label="Market watch" />
          <Sep />
          <button className="h-[34px] w-9 pt-px font-['Noto_Sans',sans-serif] text-[#1272b8]">IDE</button>
          <ToolButton icon={icons.bag} label="Market" />
          <ToolButton icon={icons.signal} label="Signals" />
          <ToolButton icon={icons.cloud} label="VPS" />
          <ToolButton icon={icons.target} label="Optimization" />
          <Sep />
          <button className="flex h-[34px] w-[126px] items-center gap-[11px] border-t border-l border-[#a9b4bb] bg-[#cde4f4] pt-px pl-[10px] whitespace-nowrap">
            {icons.play}
            Algo Trading
          </button>
          <button className="flex h-[34px] w-[113px] items-center gap-[9px] pt-px pl-2 whitespace-nowrap">
            {icons.newOrder}
            New Order
          </button>
          <Sep />
          <ToolButton icon={icons.bars} label="Bar chart" />
          <ToolButton icon={icons.candles} label="Candlesticks" active />
          <ToolButton icon={icons.wave} label="Line chart" />
          <Sep />
          <ToolButton icon={icons.zoomIn} label="Zoom in" />
          <ToolButton icon={icons.zoomOut} label="Zoom out" />
          <Sep />
          <ToolButton icon={icons.tile} label="Tile windows" />
          <Sep />
          <ToolButton icon={icons.scrollEnd} label="Auto scroll" />
          <ToolButton icon={icons.shift} label="Chart shift" />
          <Sep />
          <ToolButton icon={icons.camera} label="Screenshot" />
        </div>
        <div className="flex h-[34px] items-center gap-[21px] pt-px pr-[6px]">
          <button aria-label="Search">
            <svg width="18" height="18" viewBox="0 0 18 18" fill="none" stroke="#222" strokeWidth="1.500" aria-hidden="true">
              <circle cx="8" cy="8" r="6.800" />
              <path d="M12.800 12.800L17.300 17.300" />
            </svg>
          </button>
          <button aria-label="Account" className="relative mr-[15px]">
            <svg width="18" height="18" viewBox="0 0 18 18" fill="none" stroke="#222" strokeWidth="1.500" aria-hidden="true">
              <circle cx="9" cy="9" r="8" />
              <circle cx="9" cy="6.800" r="3" />
              <path d="M3.500 14.500c1-4 10-4 11 0" />
            </svg>
            <span className="absolute -top-[5px] left-[9px] h-5 w-5 rounded-full bg-[#ff3c14] text-center text-sm leading-5 font-semibold text-white">1</span>
          </button>
          <div className="flex flex-col items-center text-[#0fbb2c]">
            <svg width="12" height="11" viewBox="0 0 12 11" fill="none" stroke={G} strokeWidth="1.500" aria-hidden="true">
              <path d="M6 1l4.500 4.500H8V8.500L6 10.500 4 8.500V5.500H1.500z" />
            </svg>
            <span className="text-[9px] leading-[9px] font-semibold">LVL</span>
          </div>
          <div className="-ml-[11px] h-[18px] w-14 border border-[#8a8a8a] bg-white">
            <div className="h-full w-[65%] bg-[#00e010]" />
          </div>
        </div>
      </div>

      <div className="flex items-center gap-[3px] pt-[3px] pb-[2px] pl-[5px]">
        <Grip />
        <ToolButton icon={icons.cursor} label="Cursor" active />
        <ToolButton icon={icons.crosshair} label="Crosshair" />
        <Sep />
        <ToolButton icon={icons.vline} label="Vertical line" />
        <ToolButton icon={icons.hline} label="Horizontal line" />
        <ToolButton icon={icons.trend} label="Trend line" />
        <ToolButton icon={icons.channel} label="Equidistant channel" />
        <ToolButton icon={icons.fibo} label="Fibonacci retracement" />
        <ToolButton icon={icons.text} label="Text" />
        <DropButton icon={icons.shapes} label="Shapes" />
        <Grip />
        <div className="flex gap-[3px] pl-[5px]">
          {timeframes.map((t) => (
            <button
              key={t}
              className={
                t === "H1"
                  ? "h-[34px] w-9 border-t border-l border-[#a9b4bb] bg-[#cde4f4] pt-px text-[#1272b8]"
                  : "h-[34px] w-9 pt-[2px] text-[#1272b8]"
              }
            >
              {t}
            </button>
          ))}
        </div>
      </div>

      <PriceChart />

      <div className="flex h-[30px] items-start justify-between border-b border-[#b0b0b0]">
        <div className="flex pl-1 text-[#7d7d7d]">
          {chartTabs.map((t, i) => (
            <button
              key={i}
              className={i < 9 ? "mt-[3px] h-[18px] w-[109px] border-r border-[#8a8a8a] leading-5" : "mt-[3px] h-[18px] w-[109px] leading-5"}
            >
              {t}
            </button>
          ))}
          <button className="h-[23px] w-[108px] border border-t-0 border-[#1a1a1a] bg-white leading-6 text-black">XAUUSD,H1</button>
          <button className="mt-1 ml-5 flex h-[18px] items-center gap-3">
            <svg width="14" height="18" viewBox="0 0 24 24" preserveAspectRatio="none" fill="none" stroke="#f29a00" strokeWidth="2" aria-hidden="true">
              <path d="M3 8h18l2 15H1z" fill="#ffca00" />
              <path d="M8 12V5c0-5 8-5 8 0v7" />
            </svg>
            Market
          </button>
        </div>
        <svg className="mt-[7px] mr-[13px]" width="30" height="8" viewBox="0 0 30 8" fill="#a0a0a0" aria-hidden="true">
          <path d="M4 0v8L0 4zM26 0v8l4-4z" />
        </svg>
      </div>

      <main className="flex min-h-0 flex-1">
        <aside className="flex w-[25px] flex-col items-center justify-between bg-[#8fb4d3] py-[6px]">
          <button aria-label="Close" className="pt-px">
            <svg width="10" height="10" viewBox="0 0 10 10" stroke="#111" strokeWidth="2" aria-hidden="true">
              <path d="M1 1l8 8M9 1L1 9" />
            </svg>
          </button>
          <span className="mr-1 rotate-180 font-['DejaVu_Sans',sans-serif] text-xs leading-4 [writing-mode:vertical-rl]">Strategy Tester</span>
        </aside>
        <section className="ml-[2px] flex min-w-0 flex-1 flex-col">
          <div className="flex min-h-0 flex-1 flex-col bg-white pt-1 pl-1 font-['DejaVu_Sans_Condensed','DejaVu_Sans',sans-serif] text-xs text-black">
            <div className="flex min-h-0 flex-[565]">
              <div className="relative min-w-0 flex-1 border border-black">
                <BalanceGraph />
                <p className="absolute top-[2px] left-1 bg-white pr-1 leading-4">
                  <span className="text-[#0000c0]">Balance</span> / <span className="text-[#00b400]">Equity</span>
                </p>
              </div>
              <ul className="-mt-1 -mb-2 flex w-[52px] flex-col justify-between pl-[5px] leading-4">
                {balanceLevels.map((v) => (
                  <li key={v}>{v}</li>
                ))}
              </ul>
            </div>
            <div className="relative mt-px flex min-h-0 flex-[140] bg-white">
              <div className="relative min-w-0 flex-1 border border-black">
                <LoadGraph />
                <p className="absolute top-[2px] left-1 leading-4">Deposit Load</p>
              </div>
              <div className="-mb-2 flex w-[52px] flex-col justify-between pl-[5px] leading-4">
                <span>10.0%</span>
                <span>0.0%</span>
              </div>
            </div>
            <div className="mr-[44px] grid h-[19px] grid-cols-[repeat(23,minmax(0,1fr))] pl-[2px] leading-[18px]">
              {testerDates.map((d) => (
                <span key={d} className="whitespace-nowrap">{d}</span>
              ))}
            </div>
          </div>
          <div className="flex h-[30px] items-start justify-between border-t border-[#1a1a1a]">
            <div className="flex pl-[5px] leading-4 text-[#7d7d7d]">
              <button className="mt-1 h-5 border-r border-[#8a8a8a] px-[13px] pb-1">Overview</button>
              <button className="mt-1 h-5 border-r border-[#8a8a8a] px-[13px] pb-1">Settings</button>
              <button className="mt-1 h-5 border-r border-[#8a8a8a] px-[13px] pb-1">Inputs</button>
              <button className="mt-1 h-5 px-[13px] pb-1">Backtest</button>
              <button className="-mt-px h-[26px] border border-t-0 border-[#1a1a1a] bg-white px-[13px] leading-6 text-black">Graph</button>
              <button className="mt-1 h-5 border-r border-[#8a8a8a] px-[13px] pb-1">Agents</button>
              <button className="mt-1 h-5 px-[13px] pb-1">Journal</button>
            </div>
            <div className="flex items-center gap-3 pt-[2px]">
              <span>00:06:54 / 00:06:54</span>
              <button className="h-[23px] w-[93px] bg-[#7fce56] leading-[22px]">Start</button>
            </div>
          </div>
        </section>
      </main>

      <footer className="flex h-[7px] justify-end border-t border-[#a8a8a8] pt-[2px]">
        {["w-[165px]", "w-[125px]", "w-[89px]", "w-[89px]", "w-[85px]", "w-[87px]", "w-[84px]", "w-[145px]"].map((w, i) => (
          <div key={i} className={`${w} border-l border-[#a8a8a8]`} />
        ))}
      </footer>
    </div>
  );
}
